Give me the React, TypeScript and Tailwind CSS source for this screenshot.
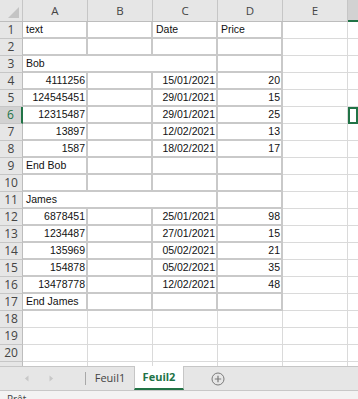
import React from 'react';

type Row = {
  n: number;
  a?: string;
  c?: string;
  d?: string;
  merged?: boolean;
  table?: boolean;
  num?: boolean;
};

const rows: Row[] = [
  { n: 1, a: 'text', c: 'Date', d: 'Price', table: true },
  { n: 2, table: true },
  { n: 3, a: 'Bob', merged: true, table: true },
  { n: 4, a: '4111256', c: '15/01/2021', d: '20', table: true, num: true },
  { n: 5, a: '124545451', c: '29/01/2021', d: '15', table: true, num: true },
  { n: 6, a: '12315487', c: '29/01/2021', d: '25', table: true, num: true },
  { n: 7, a: '13897', c: '12/02/2021', d: '13', table: true, num: true },
  { n: 8, a: '1587', c: '18/02/2021', d: '17', table: true, num: true },
  { n: 9, a: 'End Bob', table: true },
  { n: 10, table: true },
  { n: 11, a: 'James', merged: true, table: true },
  { n: 12, a: '6878451', c: '25/01/2021', d: '98', table: true, num: true },
  { n: 13, a: '1234487', c: '27/01/2021', d: '15', table: true, num: true },
  { n: 14, a: '135969', c: '05/02/2021', d: '21', table: true, num: true },
  { n: 15, a: '154878', c: '05/02/2021', d: '35', table: true, num: true },
  { n: 16, a: '13478778', c: '12/02/2021', d: '48', table: true, num: true },
  { n: 17, a: 'End James', table: true },
  { n: 18 },
  { n: 19 },
  { n: 20 },
  { n: 21 },
];

const cellText = "font-['Liberation_Sans',Arial,sans-serif] text-[10.5px] leading-[14px] text-[#111]";

function Cell({ w, text, right, table }: { w: string; text?: string; right?: boolean; table?: boolean }) {
  return (
    <div
      className={`${w} shrink-0 h-full flex items-end pb-[1px] overflow-hidden whitespace-nowrap ${
        table ? 'border-r-2 border-b-2 border-[#c9c9c9]' : 'border-r border-b border-[#dadada]'
      } ${right ? 'justify-end pr-[1px]' : 'pl-[3px]'} ${cellText}`}
    >
      {text}
    </div>
  );
}

export default function App() {
  const cols = ['A', 'B', 'C', 'D', 'E'];
  return (
    <div className="w-[358px] h-[399px] overflow-hidden bg-white flex flex-col select-none">
      {/* column headers */}
      <div className="flex h-[22px] shrink-0 bg-[#e6e6e6] border-b border-[#bdbdbd]">
        <div className="w-[23px] shrink-0 border-r border-[#c6c6c6] relative">
          <div className="absolute right-[3px] bottom-[3px] w-0 h-0 border-l-[11px] border-l-transparent border-b-[11px] border-b-[#c4c4c4]" />
        </div>
        {cols.map((c) => (
          <div
            key={c}
            className="w-[65px] shrink-0 border-r border-[#c6c6c6] flex items-center justify-center font-['Open_Sans',sans-serif] text-[11.5px] text-[#444]"
          >
            {c}
          </div>
        ))}
        <div className="flex-1 bg-[#d2d2d2] border-b-2 border-[#217346] -mb-px" />
      </div>

      {/* rows */}
      <div className="flex flex-col h-[344px] shrink-0 overflow-hidden">
        {rows.map((r) => {
          const active = r.n === 6;
          return (
            <div key={r.n} className="flex h-[17px] shrink-0">
              <div
                className={`w-[23px] shrink-0 border-b border-[#c6c6c6] flex items-center justify-center font-['Open_Sans',sans-serif] text-[12px] ${
                  active
                    ? 'bg-[#d2d2d2] text-[#217346] border-r-2 border-r-[#217346]'
                    : 'bg-[#e6e6e6] text-[#444] border-r border-r-[#bdbdbd]'
                }`}
              >
                {r.n < 21 ? r.n : null}
              </div>
              {r.merged ? (
                <Cell w="w-[195px]" text={r.a} table />
              ) : (
                <>
                  <Cell w="w-[65px]" text={r.a} right={r.num} table={r.table} />
                  <Cell w="w-[65px]" table={r.table} />
                  <Cell w="w-[65px]" text={r.c} right={r.num} table={r.table} />
                </>
              )}
              <Cell w="w-[65px]" text={r.d} right={r.num} table={r.table} />
              <Cell w="w-[65px]" />
              <div
                className={`flex-1 h-full ${
                  active ? 'border-2 border-[#217346]' : 'border-b border-[#dadada]'
                }`}
              />
            </div>
          );
        })}
      </div>

      {/* sheet tabs */}
      <div className="h-[24px] shrink-0 bg-[#e6e6e6] border-t border-[#c6c6c6] flex items-stretch">
        <div className="w-[85px] shrink-0 flex items-center">
          <svg className="ml-[24px]" width="5" height="7" viewBox="0 0 5 7">
            <path d="M4.5 0.5L0.8 3.5L4.5 6.5Z" fill="#c8c8c8" />
          </svg>
          <svg className="ml-[20px]" width="5" height="7" viewBox="0 0 5 7">
            <path d="M0.5 0.5L4.2 3.5L0.5 6.5Z" fill="#c8c8c8" />
          </svg>
        </div>
        <div className="w-px my-[5px] bg-[#a8a8a8]" />
        <div className="w-[48px] flex items-center justify-center font-['Open_Sans',sans-serif] text-[11px] text-[#444]">
          Feuil1
        </div>
        <div className="w-[50px] -mt-px bg-white border-x border-[#c6c6c6] border-b-2 border-b-[#217346] flex items-center justify-center font-['Open_Sans',sans-serif] text-[11px] font-bold text-[#217346]">
          Feuil2
        </div>
        <div className="w-[68px] flex items-center justify-center">
          <svg width="14" height="14" viewBox="0 0 14 14">
            <circle cx="7" cy="7" r="6" fill="none" stroke="#7a7a7a" strokeWidth="1" />
            <path d="M7 3.8v6.4M3.8 7h6.4" stroke="#7a7a7a" strokeWidth="1.2" />
          </svg>
        </div>
      </div>

      {/* status bar */}
      <div className="h-[9px] shrink-0 bg-[#f3f3f3] border-t border-[#c8c8c8] overflow-hidden">
        <div className="pl-[7px] pt-[2px] font-['Open_Sans',sans-serif] text-[10px] leading-[12px] text-[#444]">Prêt</div>
      </div>
    </div>
  );
}
